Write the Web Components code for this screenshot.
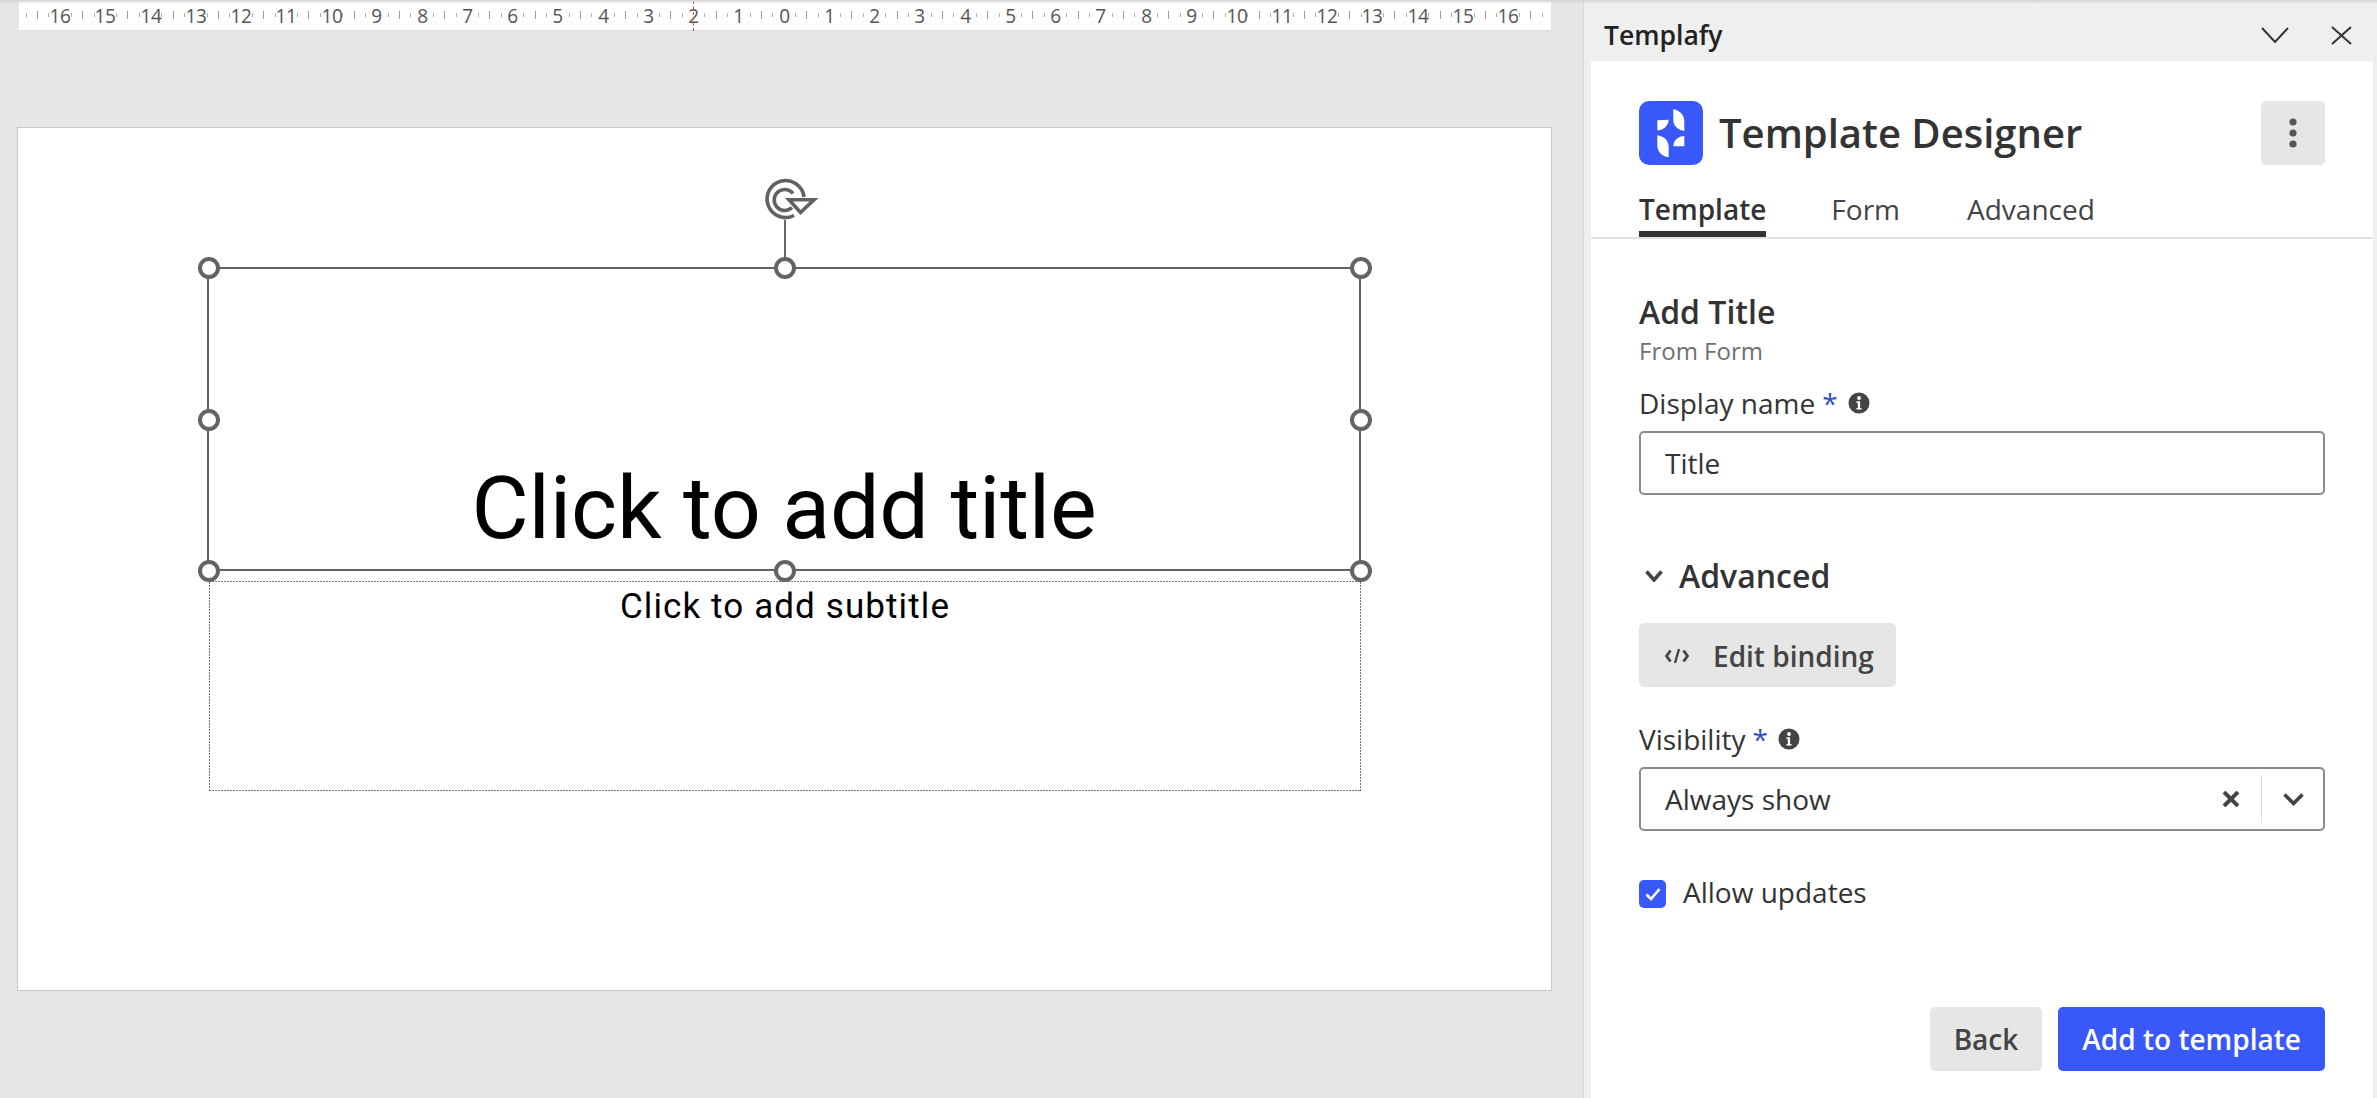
<!DOCTYPE html>
<html><head><meta charset="utf-8"><title>Template Designer</title>
<style>html,body{margin:0;padding:0;height:100%;overflow:hidden;background:#e6e6e6}</style></head>
<body><x-app></x-app>
<script>
function def(name, css, html, init){
  customElements.define(name, class extends HTMLElement{
    constructor(){super();const r=this.attachShadow({mode:'open'});
      const h=typeof html==='function'?html(this):html;
      r.innerHTML='<style>'+css+'</style>'+h;
      if(init)init(r,this);}
  });
}
const FONT='"Open Sans","Noto Sans",sans-serif';

def('x-ruler',`
:host{display:flex;position:relative;box-sizing:border-box;width:1532px;height:30px;margin:1px 0 0 19px;padding-left:1.5px;background:#fff;border-bottom:1px solid #dcdcdc;font:400 20px "Open Sans",sans-serif;color:#555}
.s{flex:none;width:11.3175px;display:flex;align-items:center;justify-content:center;height:29px;padding-bottom:1px;box-sizing:border-box}
.s i{display:block;width:1px;background:#b0b0b0}
.q i{height:4px}.h i{height:8px;background:#9a9a9a}
.n span{white-space:nowrap;letter-spacing:-.4px;transform:scaleX(.95)}
.m{position:absolute;left:674px;top:0;bottom:-1px;border-left:1px dashed #d04a3a}
`,()=>{let h='';for(let k=-67;k<=67;k++){const m=((k%4)+4)%4;
  if(m===0)h+=`<div class="s n"><span>${Math.abs(k/4)}</span></div>`;
  else if(m===2)h+='<div class="s h"><i></i></div>';
  else h+='<div class="s q"><i></i></div>';}
  return h+'<div class="m"></div>';});

def('x-handle',`:host{position:absolute;width:22px;height:22px;box-sizing:border-box;border:4px solid #636363;border-radius:50%;background:#fff;transform:translate(-50%,-50%);left:var(--x);top:var(--y)}`,'');

def('x-rotator',`:host{position:absolute;left:calc(50% + 1px);top:-49px;transform:translateX(-50%);width:2px;height:49px;background:#666}
svg{position:absolute;left:-64.5px;top:-60px;width:120px;height:120px;overflow:visible}`,
`<svg viewBox="0 0 120 120" fill="none" stroke="#616161" stroke-width="3.6">
<path d="M84 37A18.5 18.5 0 1 0 74 55.5"/>
<path d="M73 33.5A10.5 10.5 0 1 0 72 47.5"/>
<path d="M69 39.8H94L80.5 52.5Z" fill="#fff"/>
</svg>`);

def('x-title-box',`
:host{position:absolute;left:189px;top:139px;width:1154px;height:304px;box-sizing:border-box;border:2px solid #636363;display:flex;align-items:flex-end;justify-content:center;font:400 88px/1 Roboto,"Liberation Sans",sans-serif;letter-spacing:-.2px;color:#000}
.t{padding-bottom:17px;white-space:nowrap}`,
`<div class="t"><slot></slot></div>
<x-rotator></x-rotator>
<x-handle style="--x:0%;--y:-1px"></x-handle><x-handle style="--x:calc(50% + 1px);--y:-1px"></x-handle><x-handle style="--x:calc(100% + 1.5px);--y:-1px"></x-handle>
<x-handle style="--x:0%;--y:calc(50% + 1px)"></x-handle><x-handle style="--x:calc(100% + 1.5px);--y:calc(50% + 1px)"></x-handle>
<x-handle style="--x:0%;--y:calc(100% + 2px)"></x-handle><x-handle style="--x:calc(50% + 1px);--y:calc(100% + 2px)"></x-handle><x-handle style="--x:calc(100% + 1.5px);--y:calc(100% + 2px)"></x-handle>`);

def('x-subtitle-box',`
:host{position:absolute;left:191px;top:453px;width:1152px;height:210px;box-sizing:border-box;display:flex;justify-content:center;font:400 35px/40px Roboto,"Liberation Sans",sans-serif;letter-spacing:1.1px;color:#000;padding-top:5.5px;
background:
repeating-linear-gradient(90deg,#777 0 2px,transparent 2px 3px) left top/100% 1px no-repeat,
repeating-linear-gradient(90deg,#777 0 2px,transparent 2px 3px) left bottom/100% 1px no-repeat,
repeating-linear-gradient(0deg,#777 0 2px,transparent 2px 3px) left top/1px 100% no-repeat,
repeating-linear-gradient(0deg,#777 0 2px,transparent 2px 3px) right top/1px 100% no-repeat}`,`<slot></slot>`);

def('x-slide',`:host{display:block;position:relative;box-sizing:border-box;width:1535px;height:864px;margin:96px 0 0 17px;background:#fff;border:1px solid #c8c8c8}`,
`<x-subtitle-box>Click to add subtitle</x-subtitle-box><x-title-box>Click to add title</x-title-box>`);

def('x-editor',`:host{display:block;flex:none;width:1583px;height:100%;background:#e6e6e6;border-right:1px solid #d8d8d8;box-sizing:content-box}`,`<x-ruler></x-ruler><x-slide></x-slide>`);

def('x-pane-bar',`:host{display:flex;align-items:center;height:61px;box-sizing:border-box;padding:9px 25px 0 20px;font:600 26.5px "Open Sans",sans-serif;color:#222}
.sp{flex:1}svg{display:block;fill:none;stroke:#333;stroke-width:2}`,
`<span>Templafy</span><div class="sp"></div>
<svg width="28" height="16" viewBox="0 0 28 16" style="margin-right:42px"><path d="M1 1L14 15L27 1"/></svg>
<svg width="21" height="19" viewBox="0 0 21 19"><path d="M1 1L20 18M20 1L1 18"/></svg>`);

def('x-logo',`:host{display:block;flex:none;width:64px;height:64px;background:#3858f9;border-radius:10px}svg{display:block}`,
`<svg width="64" height="64" viewBox="57 32 192 192" fill="#fff">
<path d="M160 57C180 60 193 75 193 95V122C175 120 160 108 160 90Z"/>
<path d="M112 90L146 88C146 105 130 120 112 120Z"/>
<path d="M112 135C130 137 146 150 146 170V201C126 198 112 185 112 165Z"/>
<path d="M193 137V168H160C160 150 175 137 193 137Z"/></svg>`);

def('x-hero',`:host{display:flex;align-items:center;padding-top:40px}
h1{margin:0 0 0 16px;flex:1;font:600 40px/64px "Open Sans",sans-serif;color:#333;height:64px}
.k{width:64px;height:64px;border-radius:5px;background:#e6e6e6;display:flex;align-items:center;justify-content:center}`,
`<x-logo></x-logo><h1><slot></slot></h1><div class="k"><svg width="10" height="32" viewBox="0 0 10 32" fill="#555"><circle cx="5" cy="5" r="3.6"/><circle cx="5" cy="16" r="3.6"/><circle cx="5" cy="27" r="3.6"/></svg></div>`);

def('x-tab',`:host{display:flex;align-items:center;height:72px;box-sizing:border-box;padding-top:16px;font:400 28px "Open Sans",sans-serif;color:#444;position:relative}
:host([active]){font-weight:600;color:#333}
:host([active])::after{content:"";position:absolute;left:0;right:0;bottom:0;height:6px;background:#333}`,`<slot></slot>`);

def('x-tabs',`:host{display:flex;gap:66px;margin:0 -48px;padding:0 48px;border-bottom:2px solid #e2e2e2}`,`<slot></slot>`);

def('x-info',`:host{display:inline-block;width:22px;height:22px;flex:none}svg{display:block}`,
`<svg width="22" height="22" viewBox="0 0 22 22"><circle cx="11" cy="11" r="10.5" fill="#444"/><circle cx="11" cy="6" r="1.9" fill="#fff"/><path d="M8.5 9.3h3.6v6.6h1.4v1.6h-5v-1.6h1.3v-5h-1.3z" fill="#fff"/></svg>`);

def('x-label',`:host{display:flex;align-items:center;height:36px;font:400 28px/36px "Open Sans",sans-serif;color:#333;margin-bottom:10px}
b{font-weight:400;color:#2f4fc9;margin:0 10px 0 7px}`,`<slot></slot><b>*</b><x-info></x-info>`);

def('x-input',`:host{display:flex;align-items:center;height:64px;box-sizing:border-box;border:2px solid #8a8a8a;border-radius:5px;padding:0 24px;font:400 28px "Open Sans",sans-serif;color:#333;background:#fff}`,`<slot></slot>`);

def('x-select',`:host{display:flex;align-items:center;height:64px;box-sizing:border-box;border:2px solid #8a8a8a;border-radius:5px;padding:0 19px 0 24px;font:400 28px "Open Sans",sans-serif;color:#333;background:#fff}
.v{flex:1}.d{width:1px;height:48px;background:#dcdcdc;margin:0 21px 0 21px}svg{display:block}`,
`<div class="v"><slot></slot></div>
<svg width="18" height="16" viewBox="0 0 18 16" fill="none" stroke="#444" stroke-width="4"><path d="M2 1L16 15M16 1L2 15"/></svg>
<div class="d"></div>
<svg width="21" height="13" viewBox="0 0 21 13" fill="none" stroke="#444" stroke-width="3.6"><path d="M1.5 1.5L10.5 10.5L19.5 1.5"/></svg>`);

def('x-section-head',`:host{display:flex;align-items:center;font:600 32px/40px "Open Sans",sans-serif;color:#333;gap:16px;padding-left:6px;margin-top:61px}svg{display:block}`,
`<svg width="18" height="12" viewBox="0 0 18 12" fill="none" stroke="#444" stroke-width="3.6"><path d="M1.5 1.5L9 10L16.5 1.5"/></svg><span><slot></slot></span>`);

def('x-button',`:host{display:inline-flex;align-items:center;height:64px;box-sizing:border-box;border-radius:5px;padding:0 24px;font:600 28px "Open Sans",sans-serif;color:#444;background:#e6e6e6;gap:24px;white-space:nowrap}
:host([primary]){background:#3858f9;color:#fff}`,`<slot name="icon"></slot><slot></slot>`);

def('x-checkbox',`:host{display:flex;align-items:center;font:400 28px/28px "Open Sans",sans-serif;color:#333;gap:17px;margin-top:47px}
.b{width:27px;height:28px;border-radius:5px;background:#3858f9;display:flex;align-items:center;justify-content:center}
.l{padding-bottom:4px}`,
`<div class="b"><svg width="16" height="14" viewBox="0 0 16 14" fill="none" stroke="#fff" stroke-width="2.6"><path d="M1.5 7.5L6 12L14.5 2"/></svg></div><span class="l"><slot></slot></span>`);

def('x-form',`:host{display:flex;flex-direction:column;flex:1;min-height:0}
h2{margin:53px 0 0;font:600 32px/40px "Open Sans",sans-serif;color:#333}
.sub{margin:4px 0 19px;font:400 24px/30px "Open Sans",sans-serif;color:#707070}
.b{margin-top:27px;align-self:flex-start;padding-right:22px;padding-top:1px}
.b svg{margin-left:2px}
.vis{margin-top:34px;margin-bottom:10px}
.foot{margin-top:auto;display:flex;justify-content:flex-end;gap:16px;padding-bottom:27px}`,
`<h2>Add Title</h2><div class="sub">From Form</div>
<x-label>Display name</x-label><x-input>Title</x-input>
<x-section-head>Advanced</x-section-head>
<x-button class="b"><svg slot="icon" width="24" height="16" viewBox="0 0 24 16" fill="none" stroke="#444" stroke-width="2.8" style="display:block"><path d="M5.5 2.5L1.5 8L5.5 13.5M18.5 2.5L22.5 8L18.5 13.5"/><path d="M14 1L10 15" stroke-width="2.4"/></svg>Edit binding</x-button>
<x-label class="vis">Visibility</x-label>
<x-select>Always show</x-select>
<x-checkbox>Allow updates</x-checkbox>
<div class="foot"><x-button>Back</x-button><x-button primary>Add to template</x-button></div>`);

def('x-pane',`:host{display:flex;flex-direction:column;flex:1;min-width:0;background:#efefef;box-sizing:border-box;height:100%}
.w{flex:1;display:flex;flex-direction:column;background:#fff;margin:0 4px 0 7px;padding:0 48px;min-height:0}`,
`<x-pane-bar></x-pane-bar><div class="w"><x-hero>Template Designer</x-hero>
<x-tabs><x-tab active>Template</x-tab><x-tab style="margin-left:-1px">Form</x-tab><x-tab style="margin-left:1px">Advanced</x-tab></x-tabs>
<x-form></x-form></div>`);

def('x-app',`:host{display:flex;position:relative;width:2377px;height:1098px;overflow:hidden;font-family:${FONT}}
.shade{position:absolute;left:0;right:0;top:0;height:4px;background:linear-gradient(#d4d4d4,rgba(212,212,212,0))}`,
`<x-editor></x-editor><x-pane></x-pane><div class="shade"></div>`);
</script></body></html>
